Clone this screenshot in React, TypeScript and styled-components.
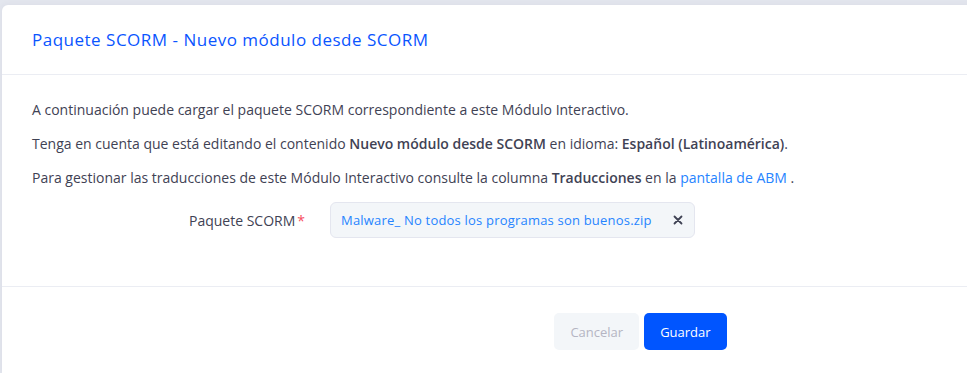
import React from 'react';
import styled, { createGlobalStyle } from 'styled-components';

const GlobalStyle = createGlobalStyle`
  html, body {
    margin: 0;
    padding: 0;
    overflow: hidden;
    background: #e3e6ee;
  }
  body {
    font-family: "Open Sans", "Noto Sans", sans-serif;
    color: #3f4254;
  }
`;

const Page = styled.div`
  padding: 5px 0 0 2px;
  height: 373px;
  box-sizing: border-box;
  overflow: hidden;
`;

const Modal = styled.div`
  width: 1277px;
  height: 368px;
  background: #ffffff;
  border-radius: 6px 0 0 0;
  box-shadow: 0 0 6px rgba(82, 63, 105, 0.06);
`;

const Header = styled.div`
  height: 70px;
  box-sizing: border-box;
  padding: 0 30px;
  display: flex;
  align-items: center;
  border-bottom: 1px solid #ebedf3;
`;

const Title = styled.h3`
  margin: 0;
  font-size: 17px;
  letter-spacing: 0.5px;
  font-weight: 500;
  color: #0a55ff;
`;

const Body = styled.div`
  height: 212px;
  box-sizing: border-box;
  padding: 25px 30px 0;
  border-bottom: 1px solid #ebedf3;
`;

const Para = styled.p`
  margin: 0 0 14px;
  font-size: 14px;
  line-height: 20px;
  color: #3f4254;
`;

const Strong = styled.b`
  font-weight: 600;
`;

const Link = styled.a`
  color: #2684ff;
  text-decoration: none;
`;

const FormRow = styled.div`
  display: grid;
  grid-template-columns: 273px 365px;
  column-gap: 25px;
  align-items: center;
  margin-top: 6px;
`;

const Label = styled.label`
  text-align: right;
  font-size: 14px;
  color: #3f4254;
`;

const Required = styled.span`
  color: #f64e60;
  margin-left: 2px;
`;

const FileBox = styled.div`
  height: 36px;
  box-sizing: border-box;
  padding: 0 11px 0 10px;
  display: flex;
  align-items: center;
  justify-content: space-between;
  background: #f3f6f9;
  border: 1px solid #e4e6ef;
  border-radius: 6px;
`;

const FileName = styled.span`
  font-size: 13px;
  letter-spacing: 0.2px;
  color: #2684ff;
  white-space: nowrap;
`;

const RemoveButton = styled.button`
  border: 0;
  background: none;
  padding: 0;
  display: flex;
  color: #3f4254;
  cursor: pointer;
`;

const Footer = styled.div`
  padding: 26px 0;
  display: flex;
  justify-content: center;
  gap: 5px;
`;

const Button = styled.button<{ $primary?: boolean }>`
  height: 37px;
  padding: 0 16px;
  border: 0;
  border-radius: 5px;
  font-family: inherit;
  font-size: 13px;
  font-weight: 500;
  background: ${(p) => (p.$primary ? '#0055ff' : '#f3f6f9')};
  color: ${(p) => (p.$primary ? '#ffffff' : '#b5b5c3')};
`;

const CloseIcon = () => (
  <svg width="10" height="10" viewBox="0 0 10 10">
    <path d="M1.5 1.5 L8.5 8.5 M8.5 1.5 L1.5 8.5" stroke="currentColor" strokeWidth="1.8" strokeLinecap="round" />
  </svg>
);

const App: React.FC = () => {
  return (
    <Page>
      <GlobalStyle />
      <Modal>
        <Header>
          <Title>Paquete SCORM - Nuevo módulo desde SCORM</Title>
        </Header>
        <Body>
          <Para>A continuación puede cargar el paquete SCORM correspondiente a este Módulo Interactivo.</Para>
          <Para>
            Tenga en cuenta que está editando el contenido <Strong>Nuevo módulo desde SCORM</Strong> en idioma:{' '}
            <Strong>Español (Latinoamérica)</Strong>.
          </Para>
          <Para>
            Para gestionar las traducciones de este Módulo Interactivo consulte la columna <Strong>Traducciones</Strong> en la{' '}
            <Link href="#">pantalla de ABM</Link> .
          </Para>
          <FormRow>
            <Label>
              Paquete SCORM<Required>*</Required>
            </Label>
            <FileBox>
              <FileName>Malware_ No todos los programas son buenos.zip</FileName>
              <RemoveButton>
                <CloseIcon />
              </RemoveButton>
            </FileBox>
          </FormRow>
        </Body>
        <Footer>
          <Button>Cancelar</Button>
          <Button $primary>Guardar</Button>
        </Footer>
      </Modal>
    </Page>
  );
};

export default App;
